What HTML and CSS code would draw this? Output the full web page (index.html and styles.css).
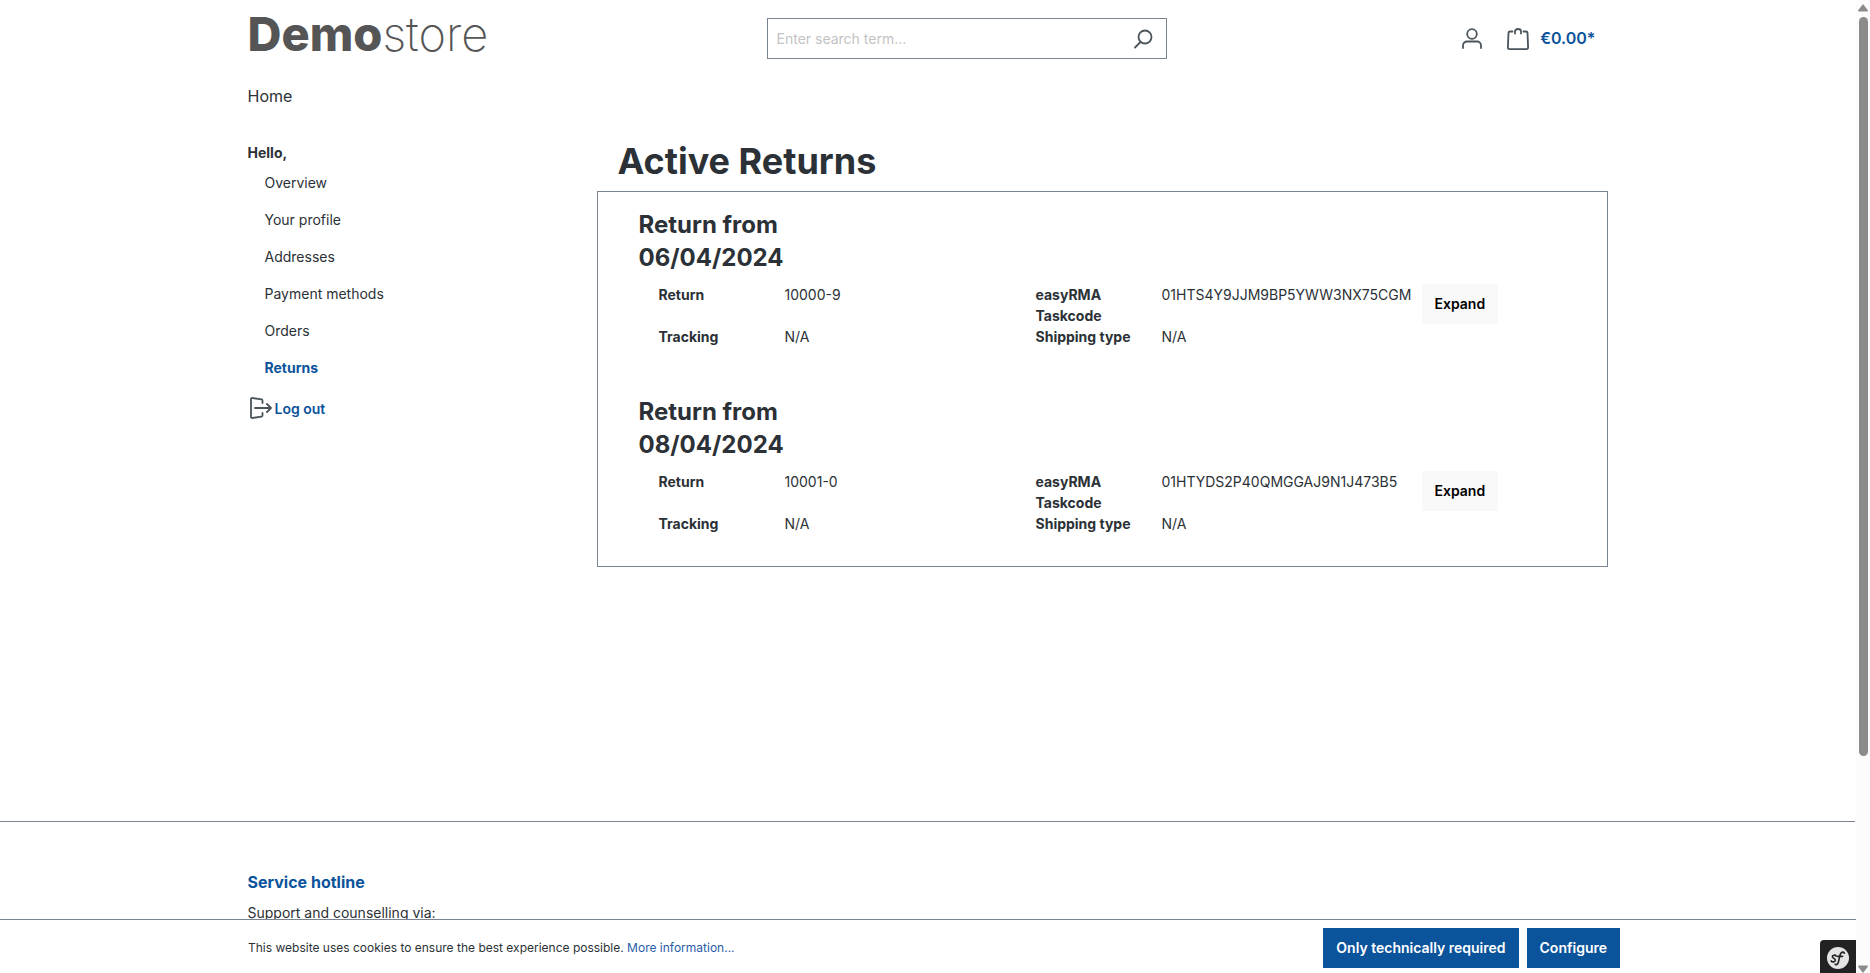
FILE: index.html
```html
<!DOCTYPE html>
<html lang="en">
<head>
<meta charset="utf-8">
<title>Active Returns</title>
<link rel="stylesheet" href="styles.css">
</head>
<body>
<div class="page">
  <header class="container header">
    <a class="logo" href="#"><strong>Demo</strong>store</a>
    <form class="search">
      <input class="search-input" type="search" placeholder="Enter search term..." aria-label="Enter search term">
      <button class="search-button" type="button" aria-label="Search">
        <svg class="icon" viewBox="0 0 22 22"><circle cx="13" cy="9" r="6.500"/><path d="M8.500 14L3 19.500"/></svg>
      </button>
    </form>
    <div class="actions">
      <button class="action" type="button" aria-label="Your account">
        <svg class="icon" viewBox="0 0 22 22"><circle cx="11" cy="6" r="4.800"/><path d="M2 20v-2.500a4 4 0 0 1 4-4h10a4 4 0 0 1 4 4V20"/></svg>
      </button>
      <a class="cart" href="#">
        <svg class="icon" viewBox="0 0 22 22"><path d="M5.500 3.500H3a1.500 1.500 0 0 0-1.500 1.400L.900 19.500A1.600 1.600 0 0 0 2.500 21.100h17a1.600 1.600 0 0 0 1.600-1.700L20.500 4.900A1.500 1.500 0 0 0 19 3.500h-2.500M8 5.500V3.500q0-2.500 3-2.500t3 2.500V5.500"/></svg>
        <span>€0.00*</span>
      </a>
    </div>
  </header>
  <nav class="container main-nav"><a href="#">Home</a></nav>
  <div class="container account">
    <aside class="sidebar">
      <div class="hello">Hello,</div>
      <nav class="side-nav">
        <a href="#">Overview</a>
        <a href="#">Your profile</a>
        <a href="#">Addresses</a>
        <a href="#">Payment methods</a>
        <a href="#">Orders</a>
        <a class="active" href="#">Returns</a>
      </nav>
      <a class="logout" href="#">
        <svg class="icon" viewBox="0 0 22 22"><path d="M12.500 6V3.500a1.200 1.200 0 0 0-1-1.100L2.500 1A1.200 1.200 0 0 0 1 2.200v17.600A1.200 1.200 0 0 0 2.500 21l9-1.400a1.200 1.200 0 0 0 1-1.100V16M5 11h16M17 7l4 4-4 4"/></svg>
        <span>Log out</span>
      </a>
    </aside>
    <main class="content">
      <h1>Active Returns</h1>
      <div class="returns">
        <section class="return">
          <h2>Return from 06/04/2024</h2>
          <div class="return-body">
            <dl class="details">
              <dt>Return</dt><dd>10000-9</dd>
              <dt>easyRMA Taskcode</dt><dd>01HTS4Y9JJM9BP5YWW3NX75CGM</dd>
              <dt>Tracking</dt><dd>N/A</dd>
              <dt>Shipping type</dt><dd>N/A</dd>
            </dl>
            <button class="button button-light" type="button">Expand</button>
          </div>
        </section>
        <section class="return">
          <h2>Return from 08/04/2024</h2>
          <div class="return-body">
            <dl class="details">
              <dt>Return</dt><dd>10001-0</dd>
              <dt>easyRMA Taskcode</dt><dd>01HTYDS2P40QMGGAJ9N1J473B5</dd>
              <dt>Tracking</dt><dd>N/A</dd>
              <dt>Shipping type</dt><dd>N/A</dd>
            </dl>
            <button class="button button-light" type="button">Expand</button>
          </div>
        </section>
      </div>
    </main>
  </div>
  <footer class="footer">
    <div class="container">
      <h3>Service hotline</h3>
      <p>Support and counselling via:</p>
    </div>
  </footer>
</div>
<div class="cookie-bar">
  <div class="container cookie-row">
    <p>This website uses cookies to ensure the best experience possible. <a href="#">More information...</a></p>
    <div class="cookie-buttons">
      <button class="button button-primary" type="button">Only technically required</button>
      <button class="button button-primary" type="button">Configure</button>
    </div>
  </div>
</div>
<button class="toolbar" type="button" aria-label="Show toolbar">
  <svg viewBox="0 0 24 24"><circle cx="12" cy="12" r="12" fill="#e4e4e4"/><path d="M10 9.800c-1-1.600-4.300-1-4.100.900.200 1.700 3.300 1.800 3.200 3.700-.100 2-3.400 2.500-4.500.800M19 6.800c-.600-2-3.600-1.600-4.500 1.200-1 3.200-1.500 6.500-2.300 9.200-.500 1.800-2.300 2.600-3.300 1.600M11.500 10.200h5.500" fill="none" stroke="#222" stroke-width="1.800" stroke-linecap="round"/></svg>
</button>
<div class="scrollbar">
  <svg class="arrow" viewBox="0 0 10 8"><path d="M5 0l5 6.500q0 1-1 1H1q-1 0-1-1z"/></svg>
  <div class="track"><div class="thumb"></div></div>
  <svg class="arrow" viewBox="0 0 10 8"><path d="M5 8l5-6.500q0-1-1-1H1q-1 0-1 1z"/></svg>
</div>
</body>
</html>
```
FILE: styles.css
```css
* { box-sizing: border-box; }
html, body { height: 100%; }
body {
  margin: 0;
  overflow: hidden;
  background: #fff;
  color: #2b3136;
  font: 14px/21px Inter, sans-serif;
}
h1, h2, h3, p, dl, dd { margin: 0; }
a { color: inherit; text-decoration: none; }
button { font: inherit; border: 0; padding: 0; background: none; cursor: pointer; }
.page { height: 100%; margin-right: 15px; overflow: hidden; }
.container { max-width: 1400px; margin: 0 auto; padding: 0 20px; }
.icon {
  display: block;
  width: 22px;
  height: 22px;
  fill: none;
  stroke: #4a545b;
  stroke-width: 1.8;
  stroke-linecap: round;
  stroke-linejoin: round;
}

.header { display: grid; grid-template-columns: 519px 400px 1fr; align-items: start; padding-top: 8px; }
.logo { color: #555; font-size: 47px; line-height: 52px; font-weight: 250; }
.logo strong { font-weight: 800; }
.search { display: flex; height: 41px; margin-top: 10px; border: 1px solid #798490; }
.search-input {
  flex: 1;
  min-width: 0;
  padding: 0 9px;
  border: 0;
  outline: 0;
  background: none;
  font: inherit;
}
.search-input::placeholder { color: #c3c3c3; }
.search-button { padding: 0 12px; }
.actions { display: flex; justify-content: flex-end; align-items: center; gap: 24px; height: 41px; margin-top: 10px; padding-right: 12px; }
.cart { display: flex; align-items: center; gap: 11px; color: #0b539b; font-size: 16px; font-weight: 600; }

.main-nav { padding-top: 24px; font-size: 16px; line-height: 24px; }
.header { min-height: 60px; }
.account { display: grid; grid-template-columns: 309px 1fr; column-gap: 40px; padding-top: 31px; align-items: start; }
.sidebar { padding-top: 3px; }
.hello { padding-bottom: 1px; font-weight: 700; }
.side-nav { display: flex; flex-direction: column; padding-left: 17px; }
.side-nav a { padding: 8px 0; }
.side-nav .active { color: #0b539b; font-weight: 700; }
.logout { display: flex; align-items: center; gap: 3px; padding: 11px 0 0 2px; color: #0b539b; font-weight: 600; }

h1 { padding-left: 21px; font-size: 36px; line-height: 44px; font-weight: 700; }
.returns { margin-top: 8px; padding: 16px 40px 32px 41px; border: 1px solid #798490; }
.return + .return { margin-top: 48px; }
h2 { max-width: 190px; font-size: 24px; line-height: 33px; font-weight: 700; }
.return-body { display: flex; align-items: flex-start; padding: 10px 0 0 20px; }
.details { display: grid; grid-template-columns: 126px 251px 126px 260px; }
dt { padding-right: 20px; font-weight: 700; }
dt:last-of-type { white-space: nowrap; }
.button { height: 40px; padding: 0 13px 1px; font-weight: 600; }
.button-light { background: #f9f9f9; color: #000; }
.button-primary { background: #0b539b; color: #fff; }

.footer { margin-top: 254px; padding-top: 48px; border-top: 1px solid #798490; }
h3 { color: #0b539b; font-size: 16px; line-height: 24px; font-weight: 700; }
.footer p { padding-top: 8px; }

.cookie-bar { position: fixed; left: 0; right: 14px; bottom: 0; background: #fff; border-top: 1px solid #798490; }
.cookie-row { display: flex; justify-content: space-between; align-items: center; padding: 8px 8px 5px 20px; }
.cookie-row p { font-size: 12px; line-height: 18px; }
.cookie-row a { color: #2a5caa; }
.cookie-buttons { display: flex; gap: 8px; }

.toolbar { position: fixed; right: 14px; bottom: 0; width: 36px; height: 33px; padding: 6px 7px 4px; border-radius: 4px 0 0 0; background: #222; }
.toolbar svg { display: block; width: 22px; height: 22px; }
.scrollbar {
  position: fixed;
  top: 0;
  right: 0;
  bottom: 0;
  display: flex;
  flex-direction: column;
  align-items: center;
  width: 14px;
  padding: 4px 0 0;
  background: #fcfcfc;
}
.arrow { width: 10px; height: 8px; fill: #8b8b8b; }
.track { flex: 1; width: 9px; padding-top: 5px; }
.thumb { height: 78%; border-radius: 5px; background: #8b8b8b; }
```
